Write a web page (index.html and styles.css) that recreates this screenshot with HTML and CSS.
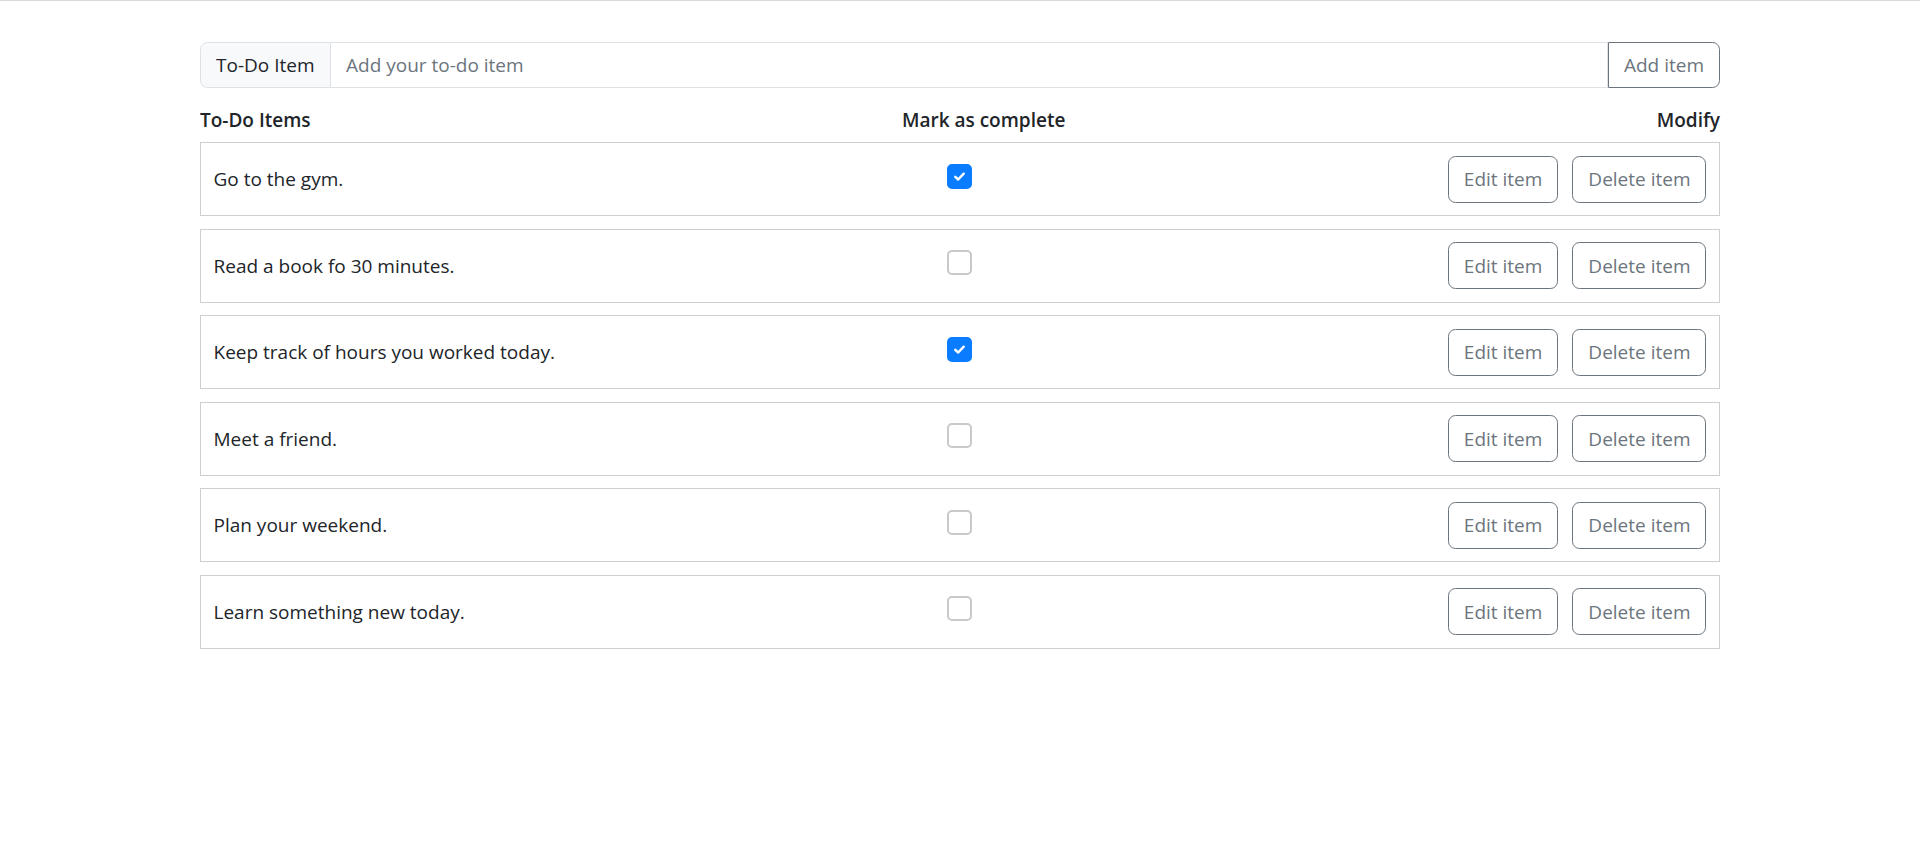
FILE: index.html
```html
<!DOCTYPE html>
<html lang="en">
<head>
<meta charset="utf-8">
<title>To-Do List</title>
<link rel="stylesheet" href="styles.css">
</head>
<body>
<div class="topline"></div>
<main class="container">
  <div class="input-group">
    <span class="addon">To-Do Item</span>
    <input class="field" type="text" placeholder="Add your to-do item">
    <button class="btn btn-add">Add item</button>
  </div>

  <div class="list-head">
    <span>To-Do Items</span>
    <span>Mark as complete</span>
    <span>Modify</span>
  </div>

  <ul class="list">
    <li class="row">
      <span class="text">Go to the gym.</span>
      <span class="check-col"><span class="check checked"><svg viewBox="0 0 16 16" width="15" height="15"><path d="M3.5 8.3 L6.6 11.2 L12.5 5" fill="none" stroke="#fff" stroke-width="2.6" stroke-linecap="round" stroke-linejoin="round"/></svg></span></span>
      <span class="actions"><button class="btn">Edit item</button><button class="btn">Delete item</button></span>
    </li>
    <li class="row">
      <span class="text">Read a book fo 30 minutes.</span>
      <span class="check-col"><span class="check"></span></span>
      <span class="actions"><button class="btn">Edit item</button><button class="btn">Delete item</button></span>
    </li>
    <li class="row">
      <span class="text">Keep track of hours you worked today.</span>
      <span class="check-col"><span class="check checked"><svg viewBox="0 0 16 16" width="15" height="15"><path d="M3.5 8.3 L6.6 11.2 L12.5 5" fill="none" stroke="#fff" stroke-width="2.6" stroke-linecap="round" stroke-linejoin="round"/></svg></span></span>
      <span class="actions"><button class="btn">Edit item</button><button class="btn">Delete item</button></span>
    </li>
    <li class="row">
      <span class="text">Meet a friend.</span>
      <span class="check-col"><span class="check"></span></span>
      <span class="actions"><button class="btn">Edit item</button><button class="btn">Delete item</button></span>
    </li>
    <li class="row">
      <span class="text">Plan your weekend.</span>
      <span class="check-col"><span class="check"></span></span>
      <span class="actions"><button class="btn">Edit item</button><button class="btn">Delete item</button></span>
    </li>
    <li class="row">
      <span class="text">Learn something new today.</span>
      <span class="check-col"><span class="check"></span></span>
      <span class="actions"><button class="btn">Edit item</button><button class="btn">Delete item</button></span>
    </li>
  </ul>
</main>
</body>
</html>
```
FILE: styles.css
```css
* { box-sizing: border-box; }

html, body {
  margin: 0;
  padding: 0;
  background: #fff;
}

body {
  font-family: "Open Sans", "Noto Sans", sans-serif;
  font-size: 19px;
  line-height: 30px;
  color: #212529;
}

.topline {
  height: 1px;
  background: #dadada;
}

.container {
  width: 1520px;
  margin: 0 auto;
  padding-top: 41px;
}

.input-group {
  display: flex;
  height: 46px;
}

.addon {
  display: flex;
  align-items: center;
  padding: 0 15px;
  width: 131px;
  background: #f8f9fa;
  border: 1px solid #dee2e6;
  border-radius: 7.5px 0 0 7.5px;
  white-space: nowrap;
}

.field {
  flex: 1;
  min-width: 0;
  border: 1px solid #dee2e6;
  border-left: 0;
  padding: 0 15px;
  font: inherit;
  color: #212529;
  outline: none;
}

.field::placeholder { color: #6c757d; }

.btn {
  font: inherit;
  color: #6c757d;
  background: #fff;
  border: 1px solid #6c757d;
  border-radius: 7.5px;
  padding: 7.5px 15px;
  line-height: 30px;
  height: 47px;
  white-space: nowrap;
  cursor: pointer;
}

.btn-add {
  height: 46px;
  width: 112px;
  padding: 0;
  border-radius: 0 7.5px 7.5px 0;
}

.list-head {
  display: flex;
  justify-content: space-between;
  font-weight: 600;
  margin-top: 17px;
  margin-bottom: 7px;
}

.list {
  list-style: none;
  margin: 0;
  padding: 0;
}

.row {
  display: grid;
  grid-template-columns: 1fr 1fr 1fr;
  align-items: center;
  height: 74px;
  padding: 12.5px;
  border: 1px solid #cfcfcf;
  margin-bottom: 12.5px;
}

.check-col {
  display: flex;
  justify-content: center;
}

.check {
  width: 25px;
  height: 25px;
  border: 2px solid #c9c9c9;
  border-radius: 5px;
  margin-bottom: 6px;
  display: flex;
  align-items: center;
  justify-content: center;
}

.check.checked {
  background: #0a7cff;
  border-color: #0a7cff;
}

.actions {
  display: flex;
  justify-content: flex-end;
  gap: 14px;
}
```
